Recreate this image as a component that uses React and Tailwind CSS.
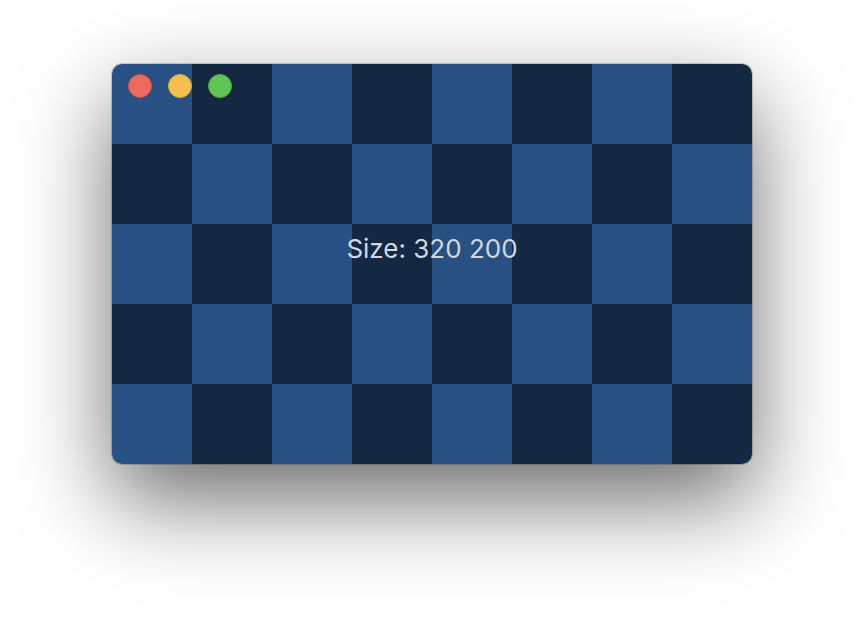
import React from 'react';

const cells = Array.from({ length: 40 }, (_, i) => (i + Math.floor(i / 8)) % 2 === 0);

function App() {
    return (
        <div className="w-full h-screen overflow-hidden bg-white flex justify-center pt-16">
            <div className="relative w-[640px] h-[400px] rounded-[10px] overflow-hidden shadow-[0_36px_90px_0_rgba(0,0,0,0.58),0_0_0_1px_rgba(0,0,0,0.18)]">
                {/* Checker background */}
                <div className="grid grid-cols-8">
                    {cells.map((light, i) => (
                        <div key={i} className={light ? 'h-20 bg-[#285082]' : 'h-20 bg-[#152841]'}></div>
                    ))}
                </div>

                {/* Traffic lights */}
                <div className="absolute top-[10px] left-4 flex gap-4">
                    <div className="w-6 h-6 rounded-full bg-[#ed6a5e] border border-[#d0534a]"></div>
                    <div className="w-6 h-6 rounded-full bg-[#f5bf4f] border border-[#d9a63e]"></div>
                    <div className="w-6 h-6 rounded-full bg-[#61c554] border border-[#50a945]"></div>
                </div>

                {/* Size label */}
                <div className="absolute inset-x-0 top-[168px] text-center font-['Inter',sans-serif] text-[26px] leading-[34px] text-[#d0d8e2]">
                    Size: 320 200
                </div>
            </div>
        </div>
    );
}

export default App;
